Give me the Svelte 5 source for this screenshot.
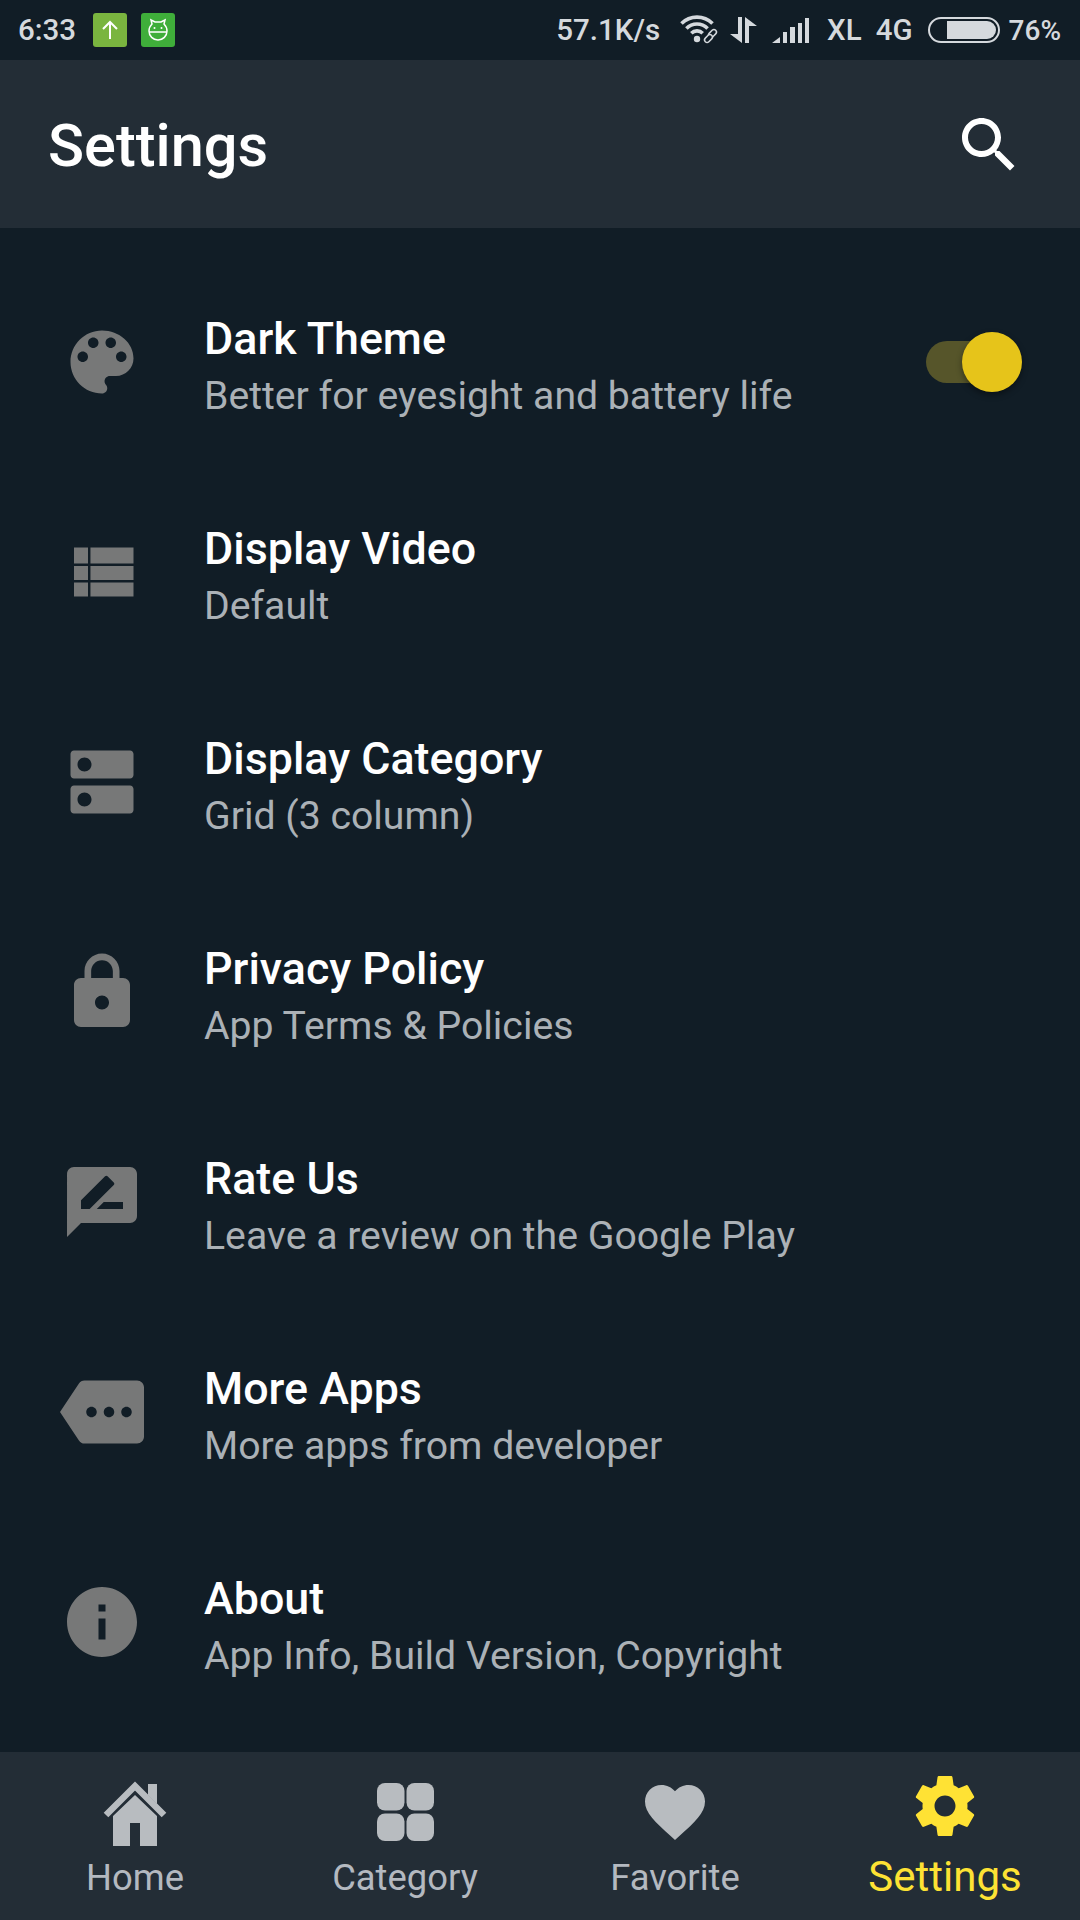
<script>
  const rows = [
    { title: 'Dark Theme', sub: 'Better for eyesight and battery life', icon: 'M12 3c-4.97 0-9 4.03-9 9s4.03 9 9 9c.83 0 1.5-.67 1.5-1.5 0-.39-.15-.74-.39-1.01-.23-.26-.38-.61-.38-.99 0-.83.67-1.5 1.5-1.5H16c2.76 0 5-2.24 5-5 0-4.42-4.03-8-9-8zm-5.5 9c-.83 0-1.5-.67-1.5-1.5S5.67 9 6.5 9 8 9.67 8 10.5 7.33 12 6.5 12zm3-4C8.67 8 8 7.33 8 6.5S8.67 5 9.5 5s1.5.67 1.5 1.5S10.33 8 9.5 8zm5 0c-.83 0-1.5-.67-1.5-1.5S13.67 5 14.5 5s1.5.67 1.5 1.5S15.33 8 14.5 8zm3 4c-.83 0-1.5-.67-1.5-1.5S16.67 9 17.5 9s1.5.67 1.5 1.5-.67 1.5-1.5 1.5z', toggle: true },
    { title: 'Display Video', sub: 'Default', icon: 'M4 14.300h4v-4H4v4zm0 4.700h4v-4H4v4zM4 9.600h4V5H4v4.600zm4.700 4.700H21v-4H8.700v4zm0 4.700H21v-4H8.700v4zM8.700 5v4.600H21V5H8.700z' },
    { title: 'Display Category', sub: 'Grid (3 column)', icon: 'M20 13H4c-.55 0-1 .45-1 1v6c0 .55.45 1 1 1h16c.55 0 1-.45 1-1v-6c0-.55-.45-1-1-1zM7 19c-1.1 0-2-.9-2-2s.9-2 2-2 2 .9 2 2-.9 2-2 2zM20 3H4c-.55 0-1 .45-1 1v6c0 .55.45 1 1 1h16c.55 0 1-.45 1-1V4c0-.55-.45-1-1-1zM7 9c-1.1 0-2-.9-2-2s.9-2 2-2 2 .9 2 2-.9 2-2 2z' },
    { title: 'Privacy Policy', sub: 'App Terms & Policies', icon: 'M18 8h-1V6c0-2.76-2.24-5-5-5S7 3.24 7 6v2H6c-1.1 0-2 .9-2 2v10c0 1.1.9 2 2 2h12c1.1 0 2-.9 2-2V10c0-1.1-.9-2-2-2zm-6 9c-1.1 0-2-.9-2-2s.9-2 2-2 2 .9 2 2-.9 2-2 2zm3.1-9H8.9V6c0-1.71 1.39-3.1 3.1-3.1 1.71 0 3.1 1.39 3.1 3.1v2z' },
    { title: 'Rate Us', sub: 'Leave a review on the Google Play', icon: 'M20 2H4c-1.1 0-1.99.9-1.99 2L2 22l4-4h14c1.1 0 2-.9 2-2V4c0-1.1-.9-2-2-2zM6 14v-2.47l6.88-6.88c.2-.2.51-.2.71 0l1.77 1.77c.2.2.2.51 0 .71L8.47 14H6zm12 0h-7.5l2-2H18v2z' },
    { title: 'More Apps', sub: 'More apps from developer', icon: 'M22 3H7c-.69 0-1.23.35-1.59.88L0 12l5.41 8.11c.36.53.9.89 1.59.89h15c1.1 0 2-.9 2-2V5c0-1.1-.9-2-2-2zM9 13.5c-.83 0-1.5-.67-1.5-1.5s.67-1.5 1.5-1.5 1.5.67 1.5 1.5-.67 1.5-1.5 1.5zm5 0c-.83 0-1.5-.67-1.5-1.5s.67-1.5 1.5-1.5 1.5.67 1.5 1.5-.67 1.5-1.5 1.5zm5 0c-.83 0-1.5-.67-1.5-1.5s.67-1.5 1.5-1.5 1.5.67 1.5 1.5-.67 1.5-1.5 1.5z' },
    { title: 'About', sub: 'App Info, Build Version, Copyright', icon: 'M12 2C6.48 2 2 6.48 2 12s4.48 10 10 10 10-4.48 10-10S17.52 2 12 2zm1 15h-2v-6h2v6zm0-8h-2V7h2v2z' }
  ];
</script>

<div class="screen">
  <div class="statusbar">
    <span class="time">6:33</span>
    <span class="notif up">
      <svg viewBox="0 0 34 34" width="34" height="34"><path d="M17 26V10M10 16l7-7 7 7" fill="none" stroke="#fff" stroke-width="2"/></svg>
    </span>
    <span class="notif droid">
      <svg viewBox="0 0 34 34" width="34" height="34">
        <path d="M11 11l-1-4 4 2h6l4-2-1 4c2 2 3 4 3 7 0 5-4 9-9 9s-9-4-9-9c0-3 1-5 3-7zM8 19h18" fill="none" stroke="#fff" stroke-width="1.5"/>
        <circle cx="13.500" cy="15" r="1" fill="#fff"/><circle cx="20.500" cy="15" r="1" fill="#fff"/>
      </svg>
    </span>
    <div class="status-right">
      <span class="speed">57.1K/s</span>
      <svg class="wifi" viewBox="0 0 42 30" width="42" height="30">
        <g fill="none" stroke="#d5d9dd" stroke-width="3.600">
          <path d="M14.300 18.300a8 8 0 0 1 11.400 0M9.400 13.400a15 15 0 0 1 21.200 0M4.500 8.500a22 22 0 0 1 31 0"/>
        </g>
        <circle cx="20" cy="24" r="3.200" fill="#d5d9dd"/>
        <g fill="#101c25" stroke="#d5d9dd" stroke-width="1.500">
          <rect x="33" y="14" width="5" height="9" rx="2.500" transform="rotate(45 35.500 18.500)"/>
          <rect x="29" y="19" width="5" height="9" rx="2.500" transform="rotate(45 31.500 23.500)"/>
        </g>
      </svg>
      <svg class="arrows" viewBox="0 0 28 26" width="28" height="26">
        <path d="M1 17h8V0h4v26zM16 26V0l12 9h-8v17z" fill="#d5d9dd"/>
      </svg>
      <svg class="signal" viewBox="0 0 37 25" width="37" height="25">
        <path d="M0 25l8-6v6zM11 14h4v11h-4zM18 9h5v16h-5zM26 5h4v20h-4zM33 0h4v25h-4z" fill="#d5d9dd"/>
      </svg>
      <span class="xl">XL</span>
      <span class="net">4G</span>
      <span class="battery"><span class="battery-fill"></span></span>
      <span class="pct">76%</span>
    </div>
  </div>

  <header class="appbar">
    <h1>Settings</h1>
    <svg viewBox="0 0 24 24" width="72" height="72"><path fill="#fff" d="M15.500 14h-.79l-.28-.27C15.410 12.590 16 11.110 16 9.500 16 5.910 13.090 3 9.500 3S3 5.910 3 9.500 5.910 16 9.500 16c1.610 0 3.090-.59 4.230-1.570l.27.28v.79l5 4.990L20.490 19l-4.990-5zm-6 0C7.010 14 5 11.990 5 9.500S7.010 5 9.500 5 14 7.010 14 9.500 11.990 14 9.500 14z"/></svg>
  </header>

  <main class="list">
    {#each rows as row}
      <div class="row">
        <svg class="row-icon" viewBox="0 0 24 24" width="84" height="84"><path d={row.icon}/></svg>
        <div class="row-text">
          <div class="row-title">{row.title}</div>
          <div class="row-sub">{row.sub}</div>
        </div>
        {#if row.toggle}
          <div class="toggle"><span class="thumb"></span></div>
        {/if}
      </div>
    {/each}
  </main>

  <nav class="bottom">
    <div class="tab">
      <svg viewBox="0 0 72 72" width="72" height="72">
        <path d="M7 39L36 10l29 29" fill="none" stroke="#b8bcc0" stroke-width="6.500"/>
        <path d="M49 8h9v20l-9-9zM14 40l22-21 22 21v30H41V47H31v23H14z" fill="#b8bcc0"/>
      </svg>
      <span>Home</span>
    </div>
    <div class="tab">
      <svg viewBox="0 0 72 72" width="72" height="72">
        <rect x="8" y="7" width="27.500" height="27.500" rx="8" fill="#b8bcc0"/>
        <rect x="37.500" y="7" width="27.500" height="27.500" rx="8" fill="#b8bcc0"/>
        <rect x="8" y="37.500" width="27.500" height="27.500" rx="8" fill="#b8bcc0"/>
        <rect x="37.500" y="37.500" width="27.500" height="27.500" rx="8" fill="#b8bcc0"/>
      </svg>
      <span>Category</span>
    </div>
    <div class="tab">
      <svg viewBox="0 0 24 24" width="72" height="72"><path fill="#b8bcc0" d="M12 21.350l-1.450-1.320C5.400 15.360 2 12.280 2 8.500 2 5.420 4.420 3 7.500 3c1.740 0 3.410.81 4.500 2.090C13.090 3.810 14.760 3 16.500 3 19.580 3 22 5.420 22 8.500c0 3.780-3.400 6.860-8.550 11.540L12 21.350z"/></svg>
      <span>Favorite</span>
    </div>
    <div class="tab active">
      <svg viewBox="0 0 24 24" width="72" height="72"><path fill="#ffe234" d="M19.430 12.980c.04-.32.07-.64.07-.98s-.03-.66-.07-.98l2.110-1.650c.19-.15.24-.42.12-.64l-2-3.460c-.12-.22-.39-.3-.61-.22l-2.490 1c-.52-.4-1.080-.73-1.690-.98l-.38-2.650C14.460 2.180 14.250 2 14 2h-4c-.25 0-.46.18-.49.42l-.38 2.650c-.61.25-1.170.59-1.690.98l-2.490-1c-.23-.09-.49 0-.61.22l-2 3.460c-.13.22-.07.49.12.64l2.110 1.650c-.04.32-.07.65-.07.98s.03.66.07.98l-2.110 1.650c-.19.15-.24.42-.12.64l2 3.460c.12.22.39.3.61.22l2.490-1c.52.4 1.080.73 1.690.98l.38 2.650c.03.24.24.42.49.42h4c.25 0 .46-.18.49-.42l.38-2.650c.61-.25 1.170-.59 1.690-.98l2.490 1c.23.09.49 0 .61-.22l2-3.460c.12-.22.07-.49-.12-.64l-2.110-1.650zM12 15.500c-1.930 0-3.500-1.570-3.500-3.500s1.570-3.500 3.500-3.500 3.500 1.570 3.500 3.500-1.570 3.500-3.500 3.500z"/></svg>
      <span>Settings</span>
    </div>
  </nav>
</div>

<style>
  :global(body) {
    background: #111d26;
  }

  .screen {
    width: 1080px;
    height: 1920px;
    display: flex;
    flex-direction: column;
    background: #111d26;
    font-family: Roboto, sans-serif;
    overflow: hidden;
  }

  .statusbar {
    height: 60px;
    display: flex;
    align-items: center;
    padding: 0 19px 0 18px;
    color: #d5d9dd;
    font-size: 29.5px;
    font-weight: 500;
  }

  .time {
    margin-right: 17px;
  }

  .notif {
    width: 34px;
    height: 34px;
    border-radius: 3px;
    display: block;
  }

  .notif svg {
    display: block;
  }

  .up {
    background: #7ab53f;
    margin-right: 14px;
  }

  .droid {
    background: #3fae3a;
  }

  .status-right {
    margin-left: auto;
    display: flex;
    align-items: center;
  }

  .speed {
    margin-right: 17px;
  }

  .wifi {
    margin-right: 10px;
  }

  .arrows {
    margin-right: 15px;
  }

  .signal {
    margin-right: 18px;
  }

  .xl {
    margin-right: 14px;
  }

  .net {
    margin-right: 15px;
  }

  .battery {
    width: 72px;
    height: 26px;
    box-sizing: border-box;
    border: 2.5px solid #d5d9dd;
    border-radius: 13px;
    margin-right: 9px;
    padding: 2px 2px 2px 17px;
    display: block;
  }

  .battery-fill {
    display: block;
    height: 100%;
    background: #d5d9dd;
    border-radius: 0 9px 9px 0;
  }

  .pct {
    font-size: 28px;
  }

  .appbar {
    height: 168px;
    background: #232d36;
    display: flex;
    align-items: center;
    justify-content: space-between;
    padding: 0 55px 0 48px;
  }

  .appbar h1 {
    margin: 0;
    padding-top: 3px;
    font-size: 59.5px;
    font-weight: 500;
    color: #fff;
  }

  .appbar svg {
    margin-top: 2px;
  }

  .list {
    flex: 1;
    padding-top: 29px;
  }

  .row {
    height: 210px;
    display: flex;
    align-items: center;
    padding: 0 58px 0 60px;
  }

  .row-icon {
    fill: #777878;
    flex: none;
  }

  .row-text {
    margin-left: 60px;
    padding-top: 10px;
    flex: 1;
  }

  .row-title {
    font-size: 44.8px;
    font-weight: 500;
    line-height: 57px;
    color: #fff;
  }

  .row-sub {
    font-size: 39.2px;
    line-height: 57px;
    margin-top: 1px;
    color: #abb1b6;
  }

  .toggle {
    position: relative;
    width: 84px;
    height: 42px;
    border-radius: 21px;
    background: #56552a;
    margin-right: 12px;
  }

  .thumb {
    position: absolute;
    right: -12px;
    top: -9px;
    width: 60px;
    height: 60px;
    border-radius: 50%;
    background: #e6c41a;
    box-shadow: 0 3px 6px rgba(0, 0, 0, 0.4);
  }

  .bottom {
    height: 168px;
    background: #232d36;
    display: grid;
    grid-template-columns: repeat(4, 1fr);
  }

  .tab {
    display: flex;
    flex-direction: column;
    align-items: center;
    padding-top: 24px;
    color: #b4b9c0;
    font-size: 36.4px;
    line-height: 44px;
  }

  .tab span {
    margin-top: 8px;
  }

  .tab.active {
    padding-top: 18px;
    color: #fde234;
    font-size: 42px;
  }

  .tab.active span {
    margin-top: 13px;
  }
</style>
